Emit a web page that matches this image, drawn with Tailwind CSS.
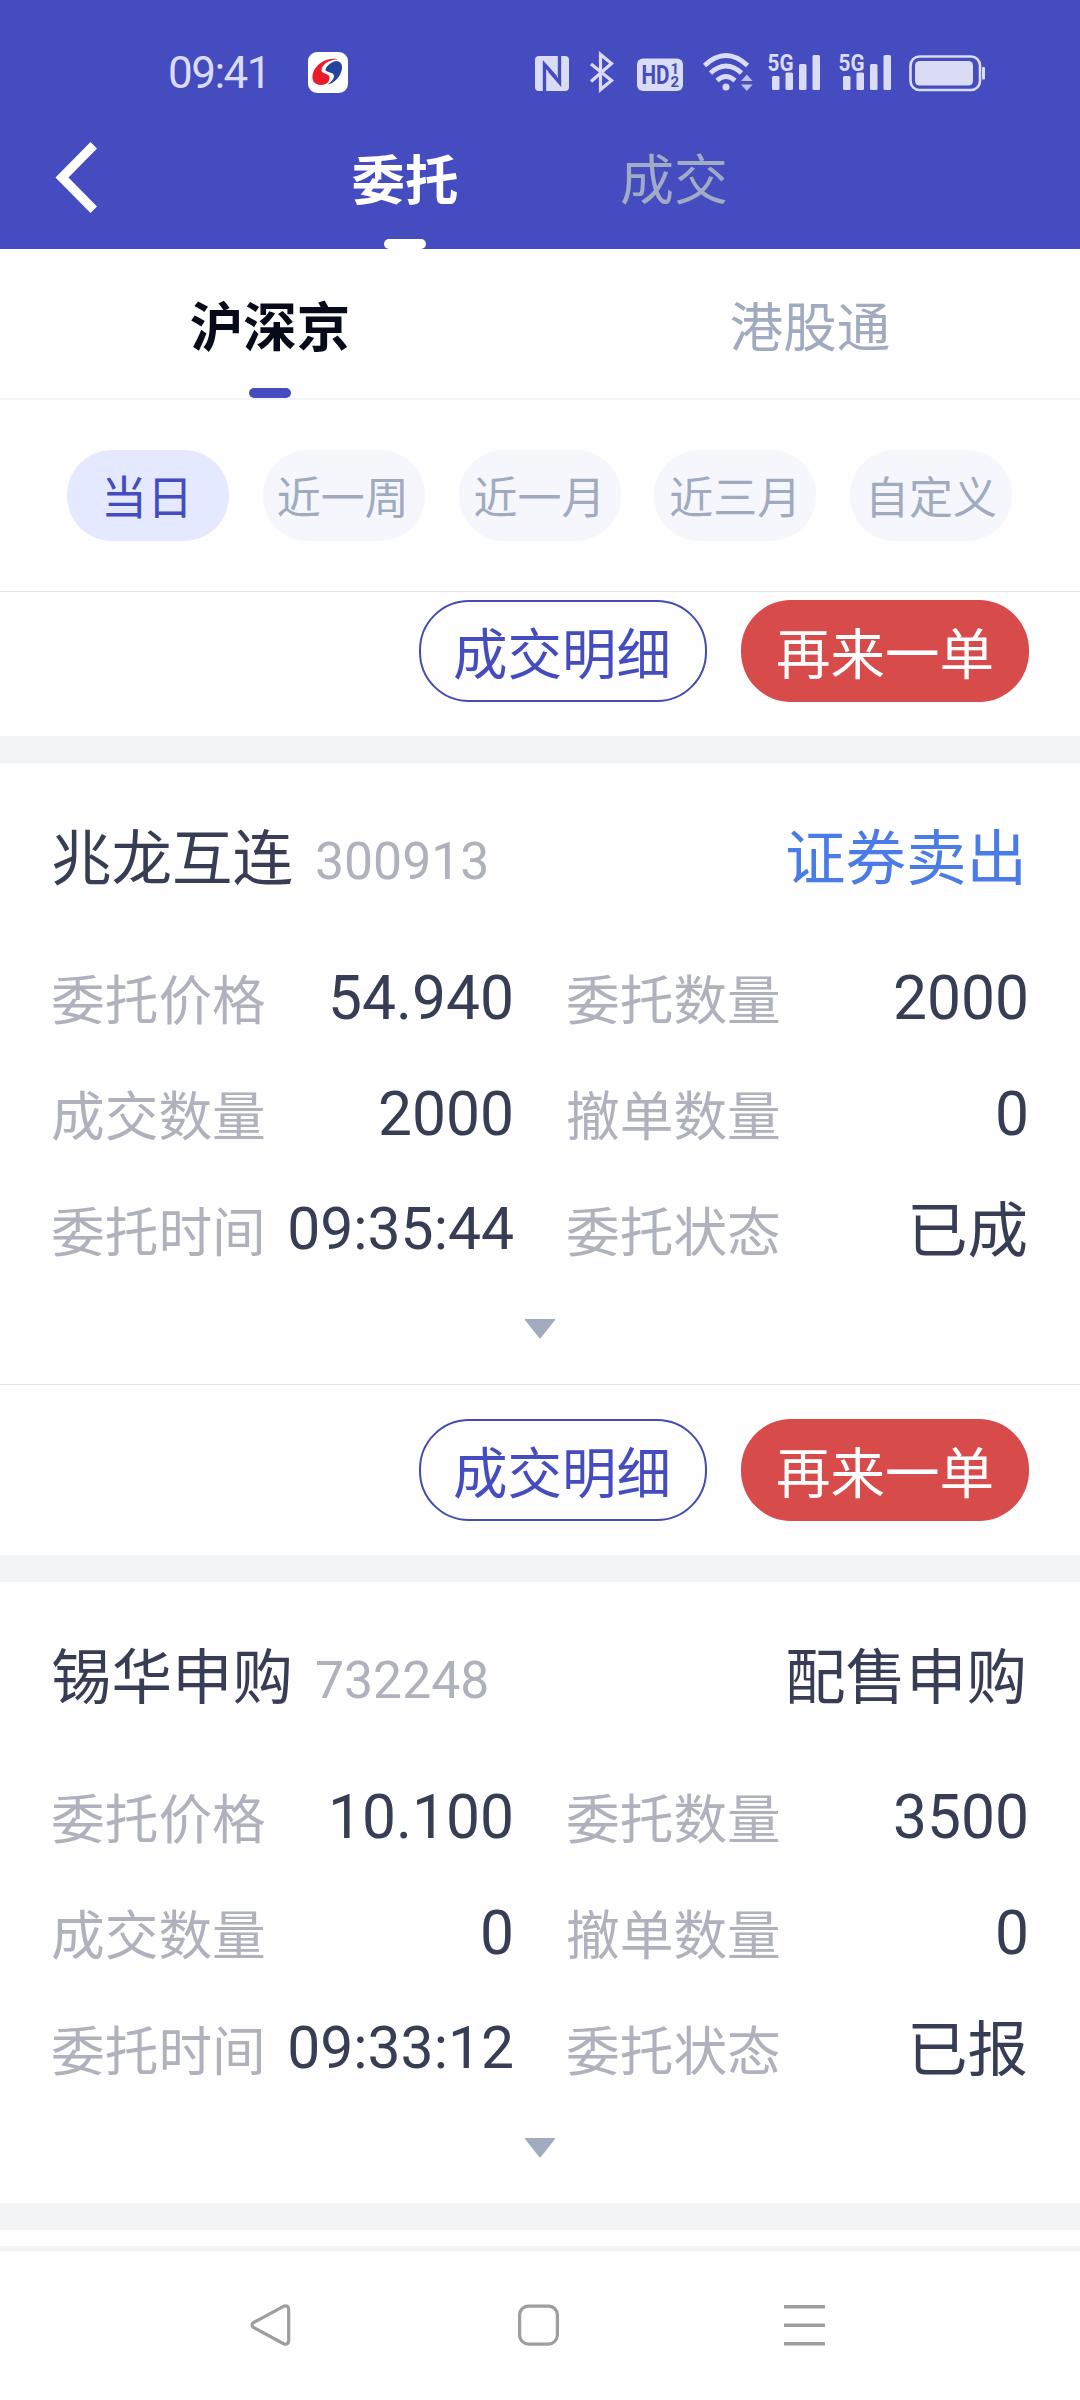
<!DOCTYPE html>
<html lang="zh-CN">
<head>
<meta charset="utf-8">
<title>委托</title>
<script src="https://cdn.jsdelivr.net/npm/@tailwindcss/browser@4"></script>
</head>
<body class="bg-white font-['Noto_Sans_CJK_SC',sans-serif] text-[#373d54]">
<div class="flex h-[2400px] w-[1080px] flex-col overflow-hidden bg-[#fefefe]">

  <header class="flex h-[249px] shrink-0 flex-col bg-[#444cbf]">
    <!-- status bar -->
    <div class="flex h-[104px] items-start pt-[52px] pl-[168px] text-[#dadcf5]">
      <div class="flex h-[42px] w-[140px] items-center font-['Roboto',sans-serif] text-[44px] leading-none tracking-[-1.5px]">09:41</div>
      <svg class="h-[41px] w-10" viewBox="0 0 40 41"><rect width="40" height="41" rx="9" fill="#fff"/><path d="M30 7.200C20 5 8 11 5 21c-2 7 1 12 8 12 5 0 9-3 8.500-8C21 21.500 14 22 13.500 18.500 13.500 12 22 7.500 30 7.200Z" fill="#ea1b2b"/><path d="M28 9c-5 1-10 5-10.500 9 1 3 8 1.500 8.500 6 0 3-3 6-6.500 8.500C27 31 33 24 34 16.500c.5-4.500-2-7.500-6-7.500Z" fill="#24439b"/></svg>
      <svg class="-mt-2 ml-[187px] h-[49px] w-[450px]" viewBox="535 44 450 49" fill="currentColor">
        <!-- nfc -->
        <rect x="535" y="56" width="34" height="35" rx="4"/>
        <path d="M544.500 91V64.500L556 77.500M559.500 56v26.500L549.500 71" fill="none" stroke="#444cbf" stroke-width="3.400"/>
        <!-- bluetooth -->
        <path d="M591 64l20.500 16.500-11 9v-35l11 9L591 81.500" fill="none" stroke="currentColor" stroke-width="3.200"/>
        <!-- hd -->
        <rect x="637" y="58.500" width="46" height="32.500" rx="6"/>
        <g fill="#444cbf" font-family="Roboto" font-weight="700"><text x="641.500" y="84" font-size="25" textLength="28" lengthAdjust="spacingAndGlyphs">HD</text><text x="670.500" y="73.500" font-size="15">1</text><text x="670.500" y="87" font-size="15">2</text></g>
        <!-- wifi -->
        <g fill="none" stroke="currentColor" stroke-width="4.800"><path d="M704.500 65.500q21.500-20 43 0M710.500 73q15.500-14 31 0M717 80.500q9-8 18 0"/></g>
        <circle cx="726" cy="87" r="3.500"/><path d="M741 81l5.800-6.500 5.800 6.500zM741 84.500h11.600l-5.800 6.500z" opacity=".8"/>
        <!-- signal -->
        <g id="sig"><text x="767.500" y="70.500" font-family="Roboto" font-weight="700" font-size="24" textLength="26" lengthAdjust="spacingAndGlyphs">5G</text><rect x="772" y="76" width="7.500" height="14" rx="1.500"/><rect x="785.500" y="72.500" width="7.500" height="17.500" rx="1.500"/><rect x="799" y="64" width="7.500" height="26" rx="1.500"/><rect x="812.500" y="55" width="7.500" height="35" rx="1.500"/></g>
        <use href="#sig" x="71"/>
        <!-- battery -->
        <rect x="910.500" y="56.500" width="69.500" height="33.500" rx="9" fill="none" stroke="currentColor" stroke-width="2.600"/><rect x="915" y="61" width="58" height="24.500" rx="4.500"/><rect x="982" y="67" width="3" height="12.500" rx="1"/>
      </svg>
    </div>
    <!-- title bar -->
    <div class="flex h-[145px] pl-[54px]">
      <svg class="mt-[37px] h-[74px] w-11" viewBox="54 141 44 74"><path d="M55.500 177.500l35-35.500 6.500 6.500-28.500 29 28.500 29-6.500 6.500z" fill="#fff"/></svg>
      <div class="ml-[239px] flex w-[136px] flex-col items-center justify-between pt-[43px] text-white"><span class="text-[53.5px] leading-[60px] font-bold">委托</span><i class="h-2.5 w-[42px] rounded-[5px] bg-white"></i></div>
      <div class="ml-[133px] flex w-[136px] flex-col items-center pt-[43px] text-[#a1abc6]"><span class="text-[54px] leading-[60px]">成交</span></div>
    </div>
  </header>

  <!-- market tabs -->
  <nav class="grid h-[151px] shrink-0 grid-cols-2 border-b-2 border-[#f3f4f6] text-[53.5px] leading-[60px]">
    <div class="flex flex-col items-center justify-between pt-[45px] font-bold text-[#070a18]"><span>沪深京</span><i class="h-2.5 w-[42px] rounded-[5px] bg-[#444cbf]"></i></div>
    <div class="flex flex-col items-center pt-[45px] text-[#a1abbf]"><span>港股通</span></div>
  </nav>

  <!-- date range -->
  <div class="flex h-[192px] shrink-0 items-start justify-between border-b border-[#e2e3e5] pr-[68px] pl-[67px] pt-[50px] text-[44px] text-[#a1abbf]">
    <span class="flex h-[91px] w-[162px] items-center justify-center rounded-[45px] bg-[#e5e9ff] pr-0.5 pb-0.5 text-[46px] text-[#444cbf]">当日</span>
    <span class="flex h-[91px] w-[162px] items-center justify-center rounded-[45px] bg-[#f6f7fd] pr-0.5 pb-0.5">近一周</span>
    <span class="flex h-[91px] w-[162px] items-center justify-center rounded-[45px] bg-[#f6f7fd] pb-0.5">近一月</span>
    <span class="flex h-[91px] w-[162px] items-center justify-center rounded-[45px] bg-[#f6f7fd] pb-0.5">近三月</span>
    <span class="flex h-[91px] w-[162px] items-center justify-center rounded-[45px] bg-[#f6f7fd] pb-0.5">自定义</span>
  </div>

  <!-- orders -->
  <main class="flex shrink-0 flex-col">
    <div class="flex h-[144px] justify-end gap-[34px] pt-2 pr-[51px] text-[54.5px] leading-[102px]">
      <span class="h-[102px] w-72 rounded-[50px] border-2 border-[#444cb0] pr-0.5 text-center leading-[98px] text-[#444cbf]">成交明细</span>
      <span class="h-[102px] w-72 rounded-[50px] bg-[#d84b4b] text-center text-white">再来一单</span>
    </div>
    <div class="h-[27px] bg-[#f3f4f6]"></div>

    <section class="flex h-[621px] flex-col px-[51px] pt-[58px]">
      <div class="flex h-[66px] items-center pr-0.5 text-[60.5px] leading-[66px]"><span>兆龙互连</span><span class="ml-[22px] pt-[15px] font-['Roboto',sans-serif] text-[51.7px] text-[#afb1bd]">300913</span><span class="ml-auto text-[#4a7be6]">证券卖出</span></div>
      <dl class="mt-[52px] grid grid-cols-2 gap-x-[52px] text-[60.5px] leading-[116px]">
        <div class="flex h-[116px] justify-between"><dt class="text-[53.7px] text-[#afb1bd]">委托价格</dt><dd class="pt-0.5 font-['Roboto',sans-serif]">54.940</dd></div>
        <div class="flex h-[116px] justify-between"><dt class="text-[53.7px] text-[#afb1bd]">委托数量</dt><dd class="pt-0.5 font-['Roboto',sans-serif]">2000</dd></div>
        <div class="flex h-[116px] justify-between"><dt class="text-[53.7px] text-[#afb1bd]">成交数量</dt><dd class="pt-0.5 font-['Roboto',sans-serif]">2000</dd></div>
        <div class="flex h-[116px] justify-between"><dt class="text-[53.7px] text-[#afb1bd]">撤单数量</dt><dd class="pt-0.5 font-['Roboto',sans-serif]">0</dd></div>
        <div class="flex h-[116px] justify-between"><dt class="text-[53.7px] text-[#afb1bd]">委托时间</dt><dd class="font-['Roboto',sans-serif] text-[58.8px]">09:35:44</dd></div>
        <div class="flex h-[116px] justify-between"><dt class="text-[53.7px] text-[#afb1bd]">委托状态</dt><dd class="-mt-[3px] pr-px">已成</dd></div>
      </dl>
      <svg class="mt-8 h-5 w-8 self-center" viewBox="0 0 32 20"><path d="M1.500 0h29q1 0 .5 1L17 18.800q-1 1.200-2 0L1 1q-.5-1 .5-1z" fill="#a1abbf"/></svg>
    </section>
    <div class="flex h-[171px] justify-end gap-[34px] border-t border-[#e2e3e5] pt-[34px] pr-[51px] text-[54.5px] leading-[102px]">
      <span class="h-[102px] w-72 rounded-[50px] border-2 border-[#444cb0] pr-0.5 text-center leading-[98px] text-[#444cbf]">成交明细</span>
      <span class="h-[102px] w-72 rounded-[50px] bg-[#d84b4b] text-center text-white">再来一单</span>
    </div>
    <div class="h-[27px] bg-[#f3f4f6]"></div>

    <section class="flex h-[621px] flex-col px-[51px] pt-[58px]">
      <div class="flex h-[66px] items-center pr-0.5 text-[60.5px] leading-[66px]"><span>锡华申购</span><span class="ml-[22px] pt-[15px] font-['Roboto',sans-serif] text-[51.7px] text-[#afb1bd]">732248</span><span class="ml-auto">配售申购</span></div>
      <dl class="mt-[52px] grid grid-cols-2 gap-x-[52px] text-[60.5px] leading-[116px]">
        <div class="flex h-[116px] justify-between"><dt class="text-[53.7px] text-[#afb1bd]">委托价格</dt><dd class="pt-0.5 font-['Roboto',sans-serif]">10.100</dd></div>
        <div class="flex h-[116px] justify-between"><dt class="text-[53.7px] text-[#afb1bd]">委托数量</dt><dd class="pt-0.5 font-['Roboto',sans-serif]">3500</dd></div>
        <div class="flex h-[116px] justify-between"><dt class="text-[53.7px] text-[#afb1bd]">成交数量</dt><dd class="pt-0.5 font-['Roboto',sans-serif]">0</dd></div>
        <div class="flex h-[116px] justify-between"><dt class="text-[53.7px] text-[#afb1bd]">撤单数量</dt><dd class="pt-0.5 font-['Roboto',sans-serif]">0</dd></div>
        <div class="flex h-[116px] justify-between"><dt class="text-[53.7px] text-[#afb1bd]">委托时间</dt><dd class="font-['Roboto',sans-serif] text-[58.8px]">09:33:12</dd></div>
        <div class="flex h-[116px] justify-between"><dt class="text-[53.7px] text-[#afb1bd]">委托状态</dt><dd class="-mt-[3px] pr-px">已报</dd></div>
      </dl>
      <svg class="mt-8 h-5 w-8 self-center" viewBox="0 0 32 20"><path d="M1.500 0h29q1 0 .5 1L17 18.800q-1 1.200-2 0L1 1q-.5-1 .5-1z" fill="#a1abbf"/></svg>
    </section>
    <div class="h-[27px] bg-[#f3f4f6]"></div>
    <div class="h-[21px] border-b-[5px] border-[#f3f4f6]"></div>
  </main>

  <!-- system navigation -->
  <footer class="flex h-[149px] shrink-0 items-start pt-[53px] pl-[250px]">
    <svg class="h-[42px] w-[41px]" viewBox="0 0 41 42" fill="none" stroke="#9e9e9e" stroke-width="3.200"><path d="M33.500 2.300 3.500 18.500Q.5 21 3.500 23.500L33.500 39.700Q38.700 41.500 38.700 36V6Q38.700.5 33.500 2.300Z"/></svg>
    <svg class="ml-[227px] h-[42px] w-[41px]" viewBox="0 0 41 42" fill="none" stroke="#9e9e9e" stroke-width="3.200"><rect x="1.600" y="2.100" width="37.800" height="38" rx="9"/></svg>
    <svg class="ml-[225px] h-[42px] w-[41px]" viewBox="0 0 41 42" fill="#9e9e9e"><rect y="1" width="41" height="3.500" rx=".5"/><rect y="19.500" width="41" height="3.500" rx=".5"/><rect y="38" width="41" height="3.500" rx=".5"/></svg>
  </footer>
</div>
</body>
</html>
